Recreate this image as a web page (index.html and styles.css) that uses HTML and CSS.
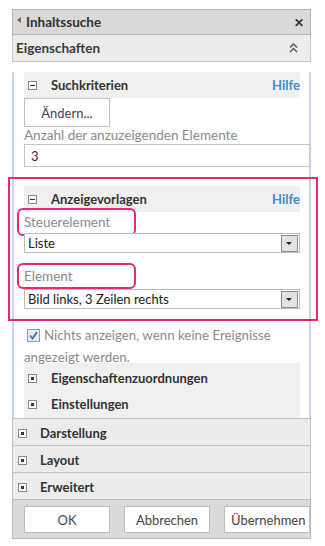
FILE: index.html
```html
<!DOCTYPE html>
<html lang="de">
<head>
    <meta charset="UTF-8">
    <title>Inhaltssuche</title>
    <link rel="stylesheet" href="styles.css">
</head>
<body>
<div class="panel">
    <div class="title">
        <span class="back"></span>
        <span class="title-text">Inhaltssuche</span>
        <span class="close">✕</span>
    </div>
    <div class="props-head">
        <span>Eigenschaften</span>
        <svg class="collapse" width="9" height="10" viewBox="0 0 9 10">
            <path d="M1 4.5 L4.5 1 L8 4.5 M1 9 L4.5 5.5 L8 9" fill="none" stroke="#555" stroke-width="1.4"/>
        </svg>
    </div>
    <div class="content">
        <div class="group-head">
            <span class="toggle minus"></span>
            <span class="group-name">Suchkriterien</span>
            <span class="help">Hilfe</span>
        </div>
        <button class="btn-change" type="button">Ändern...</button>
        <div class="field-label">Anzahl der anzuzeigenden Elemente</div>
        <input class="text-input" type="text" value="3">

        <div class="highlight">
            <div class="group-head">
                <span class="toggle minus"></span>
                <span class="group-name">Anzeigevorlagen</span>
                <span class="help">Hilfe</span>
            </div>
            <div class="marked-label">Steuerelement</div>
            <div class="select">
                <span class="select-text">Liste</span>
                <span class="select-btn"></span>
            </div>
            <div class="marked-label second">Element</div>
            <div class="select">
                <span class="select-text">Bild links, 3 Zeilen rechts</span>
                <span class="select-btn"></span>
            </div>
        </div>

        <div class="check-row">
            <svg class="checkbox" width="13" height="13" viewBox="0 0 13 13">
                <rect x="0.5" y="0.5" width="12" height="12" fill="#e4ecf5" stroke="#8e9fb3"/>
                <path d="M3 6.5 L5.5 9.5 L10 3" fill="none" stroke="#3a6fb8" stroke-width="1.7"/>
            </svg>Nichts anzeigen, wenn keine Ereignisse angezeigt werden.
        </div>

        <div class="sub-groups">
            <div class="sub-row"><span class="toggle plus"></span><span class="group-name">Eigenschaftenzuordnungen</span></div>
            <div class="sub-row"><span class="toggle plus"></span><span class="group-name">Einstellungen</span></div>
        </div>
    </div>
    <div class="section"><span class="toggle plus"></span><span class="section-name">Darstellung</span></div>
    <div class="section"><span class="toggle plus"></span><span class="section-name">Layout</span></div>
    <div class="section"><span class="toggle plus"></span><span class="section-name">Erweitert</span></div>
    <div class="footer">
        <button class="btn" type="button">OK</button>
        <button class="btn" type="button">Abbrechen</button>
        <button class="btn" type="button">Übernehmen</button>
    </div>
</div>
</body>
</html>
```

FILE: styles.css
```css
body {
    margin: 0;
    font-family: Lato, "Noto Sans", sans-serif;
    font-size: 13px;
    color: #333;
    background: #fff;
}

.panel {
    margin: 9px 0 0 12px;
    width: 299px;
}

.title {
    display: flex;
    align-items: center;
    height: 24px;
    padding: 0 6px 0 4px;
    border: 1px solid #b3b3b3;
    background: #d9d9d9;
}

.back {
    width: 0;
    height: 0;
    margin: -4px 5px 0 0;
    border-top: 3px solid transparent;
    border-bottom: 3px solid transparent;
    border-right: 4px solid #666;
}

.title-text {
    flex: 1;
    font-size: 13.5px;
    font-weight: bold;
    color: #333;
}

.close {
    font-size: 12px;
    font-weight: bold;
    color: #333;
}

.props-head {
    display: flex;
    align-items: center;
    justify-content: space-between;
    height: 26px;
    padding: 0 12px 0 3px;
    border-left: 1px solid #c8c8c8;
    border-right: 1px solid #c8c8c8;
    border-bottom: 1px solid #c4c4c4;
    background: #ececec;
    font-size: 13.5px;
    font-weight: bold;
    color: #3a3a3a;
}

.content {
    padding: 0 9px 0 10px;
    border-left: 2px solid #c3d7ee;
    border-right: 2px solid #c3d7ee;
    background: #fff;
}

.group-head {
    display: flex;
    align-items: center;
    height: 26px;
    margin-top: 10px;
    padding-left: 4px;
    background: #f0f0f0;
}

.toggle {
    position: relative;
    box-sizing: border-box;
    width: 9px;
    height: 9px;
    border: 1px solid #8a8a8a;
    background: #fff;
}

.minus::after {
    content: "";
    position: absolute;
    left: 1px;
    top: 3px;
    width: 5px;
    height: 1px;
    background: #333;
}

.plus::after {
    content: "";
    position: absolute;
    left: 2px;
    top: 2px;
    width: 3px;
    height: 3px;
    background: #333;
}

.group-name {
    flex: 1;
    margin-left: 14px;
    font-weight: bold;
    color: #333;
}

.help {
    font-weight: bold;
    color: #3c8fd0;
}

.btn-change {
    display: block;
    width: 86px;
    height: 29px;
    border: 1px solid #c2c2c2;
    background: #fff;
    font-family: inherit;
    font-size: 13px;
    color: #444;
}

.field-label {
    height: 17px;
    line-height: 17px;
    font-size: 13.5px;
    color: #8a8a8a;
}

.text-input {
    display: block;
    box-sizing: border-box;
    width: 286px;
    height: 23px;
    margin: 0;
    padding: 0 6px;
    border: 1px solid #c6c6c6;
    font-family: inherit;
    font-size: 13px;
    color: #333;
}

.highlight {
    margin: 10px -18px 0 -16px;
    padding: 7px 16px 10px 14px;
    border: 2px solid #e5287a;
}

.highlight .group-head {
    margin-top: 0;
}

.marked-label {
    box-sizing: border-box;
    width: 119px;
    height: 28px;
    margin: -4px 0 -3px -7px;
    padding-left: 5px;
    line-height: 24px;
    border: 2px solid #e5287a;
    border-radius: 6px;
    font-size: 13.5px;
    color: #8a8a8a;
}

.marked-label.second {
    height: 26px;
    margin: 10px 0 0 -7px;
    line-height: 22px;
}

.select {
    display: flex;
    align-items: center;
    box-sizing: border-box;
    height: 20px;
    padding-left: 3px;
    border: 1px solid #bcbcbc;
    background: #fff;
}

.select-text {
    flex: 1;
    color: #222;
}

.select-btn {
    position: relative;
    box-sizing: border-box;
    width: 17px;
    height: 17px;
    margin-right: 1px;
    border: 1px solid #8c8c8c;
    background: #e2e2e2;
}

.select-btn::after {
    content: "";
    position: absolute;
    left: 4px;
    top: 6px;
    border-left: 3px solid transparent;
    border-right: 3px solid transparent;
    border-top: 3px solid #222;
}

.check-row {
    padding-top: 3px;
    margin-bottom: -5px;
    line-height: 22px;
    font-size: 13.3px;
    color: #8a8a8a;
}

.checkbox {
    margin: 0 4px 0 3px;
    vertical-align: -2px;
}

.sub-groups {
    padding: 2px 0 1px;
    background: #f0f0f0;
}

.sub-row {
    display: flex;
    align-items: center;
    height: 26px;
    padding-left: 4px;
}

.section {
    display: flex;
    align-items: center;
    box-sizing: border-box;
    height: 27px;
    padding: 2px 0 0 5px;
    border-top: 1px solid #c4c4c4;
    border-left: 1px solid #c4c4c4;
    border-right: 1px solid #c4c4c4;
    background: #ececec;
}

.section-name {
    margin-left: 13px;
    font-weight: bold;
    color: #333;
}

.footer {
    display: flex;
    gap: 14px;
    padding: 6px 0 5px 11px;
    border: 1px solid #bdbdbd;
    background: #dadada;
}

.btn {
    width: 86px;
    height: 27px;
    border: 1px solid #bdbdbd;
    background: #fff;
    font-family: inherit;
    font-size: 13px;
    color: #444;
}
```
